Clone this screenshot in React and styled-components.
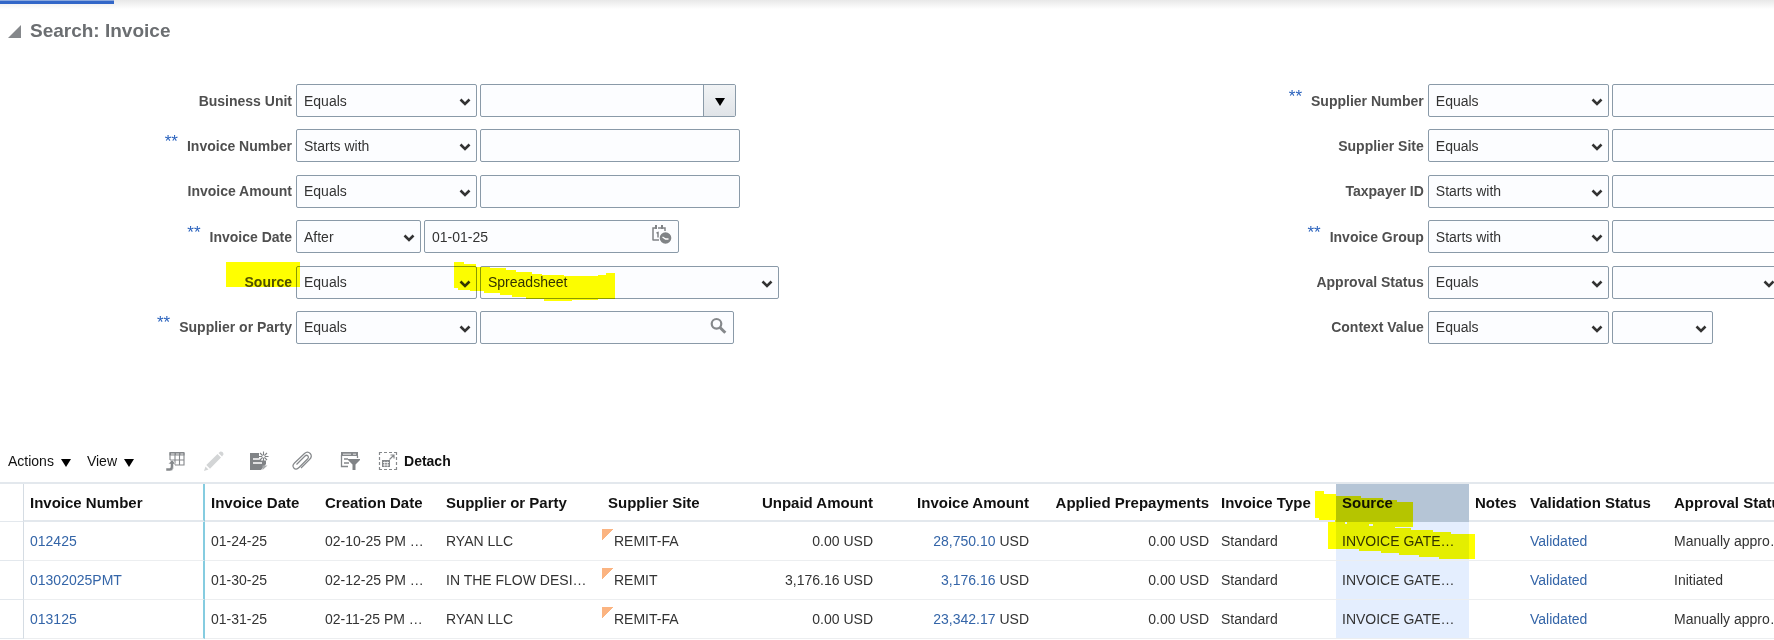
import React from 'react';
import styled, { createGlobalStyle, css } from 'styled-components';

const leftFields = [
  { label: 'Business Unit', op: 'Equals', kind: 'combo', width: 256 },
  { label: 'Invoice Number', op: 'Starts with', required: true, kind: 'text', width: 260 },
  { label: 'Invoice Amount', op: 'Equals', kind: 'text', width: 260 },
  { label: 'Invoice Date', op: 'After', opWidth: 125, required: true, kind: 'date', width: 255, value: '01-01-25' },
  { label: 'Source', op: 'Equals', kind: 'select', width: 299, value: 'Spreadsheet', marked: true },
  { label: 'Supplier or Party', op: 'Equals', required: true, kind: 'search', width: 254 },
];

const rightFields = [
  { label: 'Supplier Number', op: 'Equals', required: true, kind: 'text', width: 260 },
  { label: 'Supplier Site', op: 'Equals', kind: 'text', width: 260 },
  { label: 'Taxpayer ID', op: 'Starts with', kind: 'text', width: 260 },
  { label: 'Invoice Group', op: 'Starts with', required: true, kind: 'text', width: 260 },
  { label: 'Approval Status', op: 'Equals', kind: 'select', width: 169, value: '' },
  { label: 'Context Value', op: 'Equals', kind: 'select', width: 101, value: '' },
];

const columns = [
  { key: 'number', title: 'Invoice Number', width: 181, link: true, frozen: true },
  { key: 'date', title: 'Invoice Date', width: 114 },
  { key: 'created', title: 'Creation Date', width: 121 },
  { key: 'party', title: 'Supplier or Party', width: 162 },
  { key: 'site', title: 'Supplier Site', width: 120, flagged: true },
  { key: 'unpaid', title: 'Unpaid Amount', width: 157, right: true },
  { key: 'amount', title: 'Invoice Amount', width: 156, right: true },
  { key: 'prepaid', title: 'Applied Prepayments', width: 180, right: true },
  { key: 'type', title: 'Invoice Type', width: 121 },
  { key: 'source', title: 'Source', width: 133, selected: true },
  { key: 'notes', title: 'Notes', width: 55 },
  { key: 'validation', title: 'Validation Status', width: 144, link: true },
  { key: 'approval', title: 'Approval Status', width: 150 },
];

const rows = [
  {
    number: '012425', date: '01-24-25', created: '02-10-25 PM …', party: 'RYAN LLC', site: 'REMIT-FA',
    unpaid: '0.00 USD', amount: '28,750.10', prepaid: '0.00 USD', type: 'Standard',
    source: 'INVOICE GATE…', validation: 'Validated', approval: 'Manually appro…',
  },
  {
    number: '01302025PMT', date: '01-30-25', created: '02-12-25 PM …', party: 'IN THE FLOW DESI…', site: 'REMIT',
    unpaid: '3,176.16 USD', amount: '3,176.16', prepaid: '0.00 USD', type: 'Standard',
    source: 'INVOICE GATE…', validation: 'Validated', approval: 'Initiated',
  },
  {
    number: '013125', date: '01-31-25', created: '02-11-25 PM …', party: 'RYAN LLC', site: 'REMIT-FA',
    unpaid: '0.00 USD', amount: '23,342.17', prepaid: '0.00 USD', type: 'Standard',
    source: 'INVOICE GATE…', validation: 'Validated', approval: 'Manually appro…',
  },
];

const Dropdown = ({ id, label, value, width }) => (
  <SelectWrap $width={width}>
    <Select id={id} aria-label={label} defaultValue={value}>
      <option value={value}>{value}</option>
    </Select>
    <Chevron viewBox="0 0 12 8" aria-hidden="true">
      <path d="M1.5 1.5 L6 6 L10.500 1.5" fill="none" stroke="#333" strokeWidth="2.6" />
    </Chevron>
  </SelectWrap>
);

const ValueControl = ({ id, kind, width, value }) => {
  if (kind === 'select') {
    return <Dropdown id={id} value={value} width={width} />;
  }
  if (kind === 'combo') {
    return (
      <Combo $width={width}>
        <Bare id={id} type="text" />
        <ComboButton type="button" aria-label="Show choices"><Caret /></ComboButton>
      </Combo>
    );
  }
  return (
    <InputBox $width={width}>
      <Bare id={id} type="text" defaultValue={value} />
      {kind === 'date' && (
        <InnerButton type="button" aria-label="Select date and time">
          <svg width="20" height="20" viewBox="0 0 20 20">
            <path d="M1 15.500 V3 H4 M6 3 H9 M11 3 H13 V6 M1 15 H7" fill="none" stroke="#808386" strokeWidth="1.500" />
            <path d="M3 0 H5 V4 H3 Z M9 0 H11 V4 H9 Z" fill="#808386" />
            <path d="M4.500 8 L6 7.500 V12.500" fill="none" stroke="#808386" strokeWidth="1.500" />
            <circle cx="13.500" cy="13" r="5.800" fill="#808386" />
            <path d="M10.500 12 L13.500 14 H16.500" fill="none" stroke="#fff" strokeWidth="1.300" />
          </svg>
        </InnerButton>
      )}
      {kind === 'search' && (
        <InnerButton type="button" aria-label="Search">
          <svg width="18" height="18" viewBox="0 0 18 18">
            <circle cx="7.500" cy="6.800" r="4.800" fill="none" stroke="#85888b" strokeWidth="2.200" />
            <path d="M11 10.500 L16.300 15.800" stroke="#85888b" strokeWidth="3" />
          </svg>
        </InnerButton>
      )}
    </InputBox>
  );
};

const SearchField = ({ label, op, opWidth = 181, required, marked, kind, width, value }) => {
  const id = label.toLowerCase().replace(/ /g, '-');

  return (
    <FieldRow>
      <Label htmlFor={id}>
        {required && <Stars>**</Stars>}
        {label}
      </Label>
      <Dropdown label={`${label} operator`} value={op} width={opWidth} />
      <ValueControl id={id} kind={kind} width={width} value={value} />
      {marked && (
        <FieldMarker width="400" height="40" viewBox="0 0 400 40" aria-hidden="true">
          <path d="M0 0 H74 V25 H0 Z" />
          <path d="M228 0 H238 V2 H250 V5 H264 V6 H280 V8 H290 V10 H306 V12 H316 V13 H338 V14 H372 V13 H380 V11 H389 V37 H372 V38 H346 V39 H318 V37 H300 V35 H286 V33 H274 V31 H258 V29 H244 V28 H232 V26 H228 Z" />
        </FieldMarker>
      )}
    </FieldRow>
  );
};

const CellValue = ({ column, row }) => {
  const value = row[column.key];

  if (column.key === 'amount') {
    return <><Link href="#">{value}</Link> USD</>;
  }
  if (column.link) {
    return <Link href="#">{value}</Link>;
  }
  return value || null;
};

const Toolbar = () => (
  <Bar>
    <MenuButton type="button">Actions<Caret /></MenuButton>
    <MenuButton type="button">View<Caret /></MenuButton>
    <Tools>
      <Tool type="button" aria-label="Export to Excel" $gap={18}>
        <svg width="20" height="20" viewBox="0 0 20 20">
          <path d="M3.500 1 H18.500 V4.500 H3.500 Z" fill="#85888b" />
          <path d="M5 3 H8.500 M10 3 H13 M14.500 3 H17.500" stroke="#fff" strokeWidth="0.800" />
          <path d="M4 9 V1.500 M9 4 V14 M13.500 4 V14 M18 2 V14.500 M4 9 H18.500 M9 14 H18.500" fill="none" stroke="#85888b" strokeWidth="1.100" />
          <path d="M0 17 H3.500 Q4.500 17 4.500 15.500 V13 H2.500 L6 8.500 L9.500 13 H7.500 V16 Q7.500 20 4 20 H0 Z" fill="#85888b" stroke="#fff" strokeWidth="0.500" />
        </svg>
      </Tool>
      <Tool type="button" aria-label="Edit" disabled $gap={25}>
        <svg width="20" height="20" viewBox="0 0 20 20">
          <path d="M0 20 L1.500 15.500 L4.500 18.500 Z M2.300 14 L13.500 3 L17 6.500 L6 17.700 Z M14.500 2 L16.500 0.500 Q19.500 0.500 19.500 3.500 L18 5.500 Z" fill="#d3d5d6" />
        </svg>
      </Tool>
      <Tool type="button" aria-label="Create Invoice" $gap={23}>
        <svg width="20" height="20" viewBox="0 0 20 20">
          <path d="M1 2 H10 V7 L12 9.500 H17 V13 L12 19 H1 Z" fill="#808386" />
          <path d="M4 8 H11 M4 12 H13" stroke="#fff" strokeWidth="1.400" />
          <path d="M13.500 19 V14.500 H18.500 Z" fill="#a9acae" />
          <path d="M14.500 0.500 V10.500 M9.500 5.500 H19.500 M11 2 L18 9 M18 2 L11 9" stroke="#808386" strokeWidth="1.100" />
          <circle cx="14.500" cy="5.500" r="1.300" fill="#fff" />
        </svg>
      </Tool>
      <Tool type="button" aria-label="Attachments" $gap={28}>
        <svg width="20" height="20" viewBox="0 0 20 20">
          <path d="M4.500 13.500 L13 5 Q14.500 3.500 16 5 Q17 6.500 15.500 8 L7 16.500 Q4 19.500 1.800 17 Q-0.200 14.500 2.500 12 L12.500 2.500 Q15.500 -0.300 18.200 2.500 Q20.700 5.500 17.500 8.500 L9 17" fill="none" stroke="#85888b" strokeWidth="1.200" />
        </svg>
      </Tool>
      <Tool type="button" aria-label="Query By Example" $gap={18}>
        <svg width="20" height="20" viewBox="0 0 20 20">
          <path d="M1 1 H18 V5 H1 Z" fill="#85888b" />
          <path d="M3 3.200 H11 M13 3.200 H16" stroke="#fff" strokeWidth="0.800" />
          <path d="M1.500 4 V15.500 H8 M17.500 5 V7 M4 8 H8 M4 12 H9" fill="none" stroke="#85888b" strokeWidth="1.300" />
          <path d="M8 8 H20 V9 L15.500 13.500 V19 H12.500 V13.500 L8 9 Z" fill="#808386" />
        </svg>
      </Tool>
      <DetachButton type="button">
        <svg width="20" height="20" viewBox="0 0 20 20" aria-hidden="true">
          <path d="M1 1.500 H19 M1 18.500 H19 M1.500 1 V19 M18.500 1 V19" fill="none" stroke="#85888b" strokeWidth="1.200" strokeDasharray="3 2" />
          <rect x="4" y="9" width="8" height="7" fill="#85888b" />
          <path d="M5 11.500 H11 M5 14 H11 M6.700 10.500 V15.500 M9.300 10.500 V15.500" stroke="#fff" strokeWidth="0.800" />
          <path d="M11.500 8.500 L16 4 M12.500 4 H16 V7.500" fill="none" stroke="#85888b" strokeWidth="1.200" />
        </svg>
        Detach
      </DetachButton>
    </Tools>
  </Bar>
);

export default function App() {
  return (
    <Page>
      <GlobalStyle />
      <TabStrip><ActiveTab /></TabStrip>

      <Heading>
        <Disclosure width="13" height="13" viewBox="0 0 13 13" aria-hidden="true">
          <path d="M13 0 V13 H0 Z" fill="#85888b" />
        </Disclosure>
        Search: Invoice
      </Heading>

      <SearchForm onSubmit={(e) => e.preventDefault()}>
        <FieldColumn>
          {leftFields.map((field) => <SearchField key={field.label} {...field} />)}
        </FieldColumn>
        <FieldColumn>
          {rightFields.map((field) => <SearchField key={field.label} {...field} />)}
        </FieldColumn>
      </SearchForm>

      <Toolbar />

      <TableScroll>
        <Table>
          <colgroup>
            <Col $width={24} />
            {columns.map((column) => <Col key={column.key} $width={column.width} />)}
          </colgroup>
          <thead>
            <tr>
              <RowHandle as="td" />
              {columns.map((column) => (
                <HeadCell key={column.key} $right={column.right} $frozen={column.frozen} $selected={column.selected}>
                  {column.title}
                  {column.selected && (
                    <TableMarker width="160" height="70" viewBox="0 0 160 70" aria-hidden="true">
                      <path d="M0 0 H9 V3 H21 V5 H46 V7 H68 V9 H82 V11 H98 V36 H76 V35 H58 V33 H32 V31 H20 V29 H4 V27 H0 Z" />
                      <path d="M13 31 H30 V33 H54 V35 H80 V37 H96 V39 H118 V41 H136 V43 H160 V68 H124 V66 H104 V64 H84 V62 H66 V60 H44 V58 H13 Z" />
                    </TableMarker>
                  )}
                </HeadCell>
              ))}
            </tr>
          </thead>
          <tbody>
            {rows.map((row) => (
              <tr key={row.number}>
                <RowHandle />
                {columns.map((column) => (
                  <Cell
                    key={column.key}
                    $right={column.right}
                    $frozen={column.frozen}
                    $selected={column.selected}
                    $flagged={column.flagged}
                  >
                    <CellValue column={column} row={row} />
                  </Cell>
                ))}
              </tr>
            ))}
          </tbody>
        </Table>
      </TableScroll>
    </Page>
  );
}

const GlobalStyle = createGlobalStyle`
  * {
    box-sizing: border-box;
  }

  body {
    margin: 0;
    background: #fff;
    overflow: hidden;
  }

  body, button, input, select {
    font-family: 'Liberation Sans', Arial, sans-serif;
    font-size: 14px;
    color: #333;
  }
`;

const Page = styled.main`
  overflow: hidden;
`;

const TabStrip = styled.div`
  height: 9px;
  background: linear-gradient(#e8e8e8, #fff);
`;

const ActiveTab = styled.div`
  width: 114px;
  height: 4px;
  background: #3367c8;
  border-top: 1px solid #8ba8dd;
`;

const Heading = styled.h1`
  display: flex;
  align-items: center;
  gap: 9px;
  margin: 0;
  padding: 10px 8px;
  font-size: 19px;
  line-height: 24px;
  color: #6b6e71;
`;

const Disclosure = styled.svg`
  display: block;
`;

const SearchForm = styled.form`
  display: grid;
  grid-template-columns: minmax(0, 638fr) minmax(0, 362fr);
  padding-top: 31px;
`;

const FieldColumn = styled.div`
  display: flex;
  flex-direction: column;
  justify-content: space-between;
  min-height: 260px;
`;

const FieldRow = styled.div`
  position: relative;
  display: flex;
  align-items: center;
  gap: 3px;
  height: 33px;
`;

const Label = styled.label`
  flex: none;
  width: 293px;
  padding-right: 1px;
  text-align: right;
  font-weight: bold;
  color: #4f4f4f;
  white-space: nowrap;
`;

const Stars = styled.span`
  margin-right: 9px;
  font-size: 17px;
  font-weight: normal;
  line-height: 0;
  vertical-align: 4px;
  color: #2a62bd;
`;

const boxed = css`
  flex: none;
  width: ${({ $width }) => $width}px;
  height: 33px;
  border: 1px solid #8a9aa8;
  border-radius: 2px;
  background: #fcfdff;
`;

const SelectWrap = styled.span`
  ${boxed}
  position: relative;
`;

const Select = styled.select`
  display: block;
  width: 100%;
  height: 100%;
  padding: 0 24px 0 7px;
  border: 0;
  background: transparent;
  appearance: none;
`;

const Chevron = styled.svg`
  position: absolute;
  right: 5px;
  top: 13px;
  width: 12px;
  height: 8px;
  pointer-events: none;
`;

const InputBox = styled.span`
  ${boxed}
  display: flex;
  align-items: center;
`;

const Combo = styled(InputBox)`
  overflow: hidden;
`;

const Bare = styled.input`
  flex: 1;
  min-width: 0;
  height: 100%;
  padding: 0 7px;
  border: 0;
  background: transparent;
`;

const ComboButton = styled.button`
  display: flex;
  align-items: center;
  justify-content: center;
  width: 32px;
  height: 100%;
  padding: 2px 0 0;
  border: 0;
  border-left: 1px solid #8a9aa8;
  background: linear-gradient(#f1f3f5, #e0e4e8);
`;

const Caret = styled.span`
  border: 5px solid transparent;
  border-top: 8px solid #000;
  border-bottom: 0;
`;

const InnerButton = styled.button`
  display: flex;
  margin-right: 6px;
  padding: 0 0 3px;
  border: 0;
  background: none;
`;

const marker = css`
  position: absolute;
  fill: #ffff00;
  mix-blend-mode: multiply;
  pointer-events: none;
`;

const FieldMarker = styled.svg`
  ${marker}
  left: 226px;
  top: -4px;
`;

const TableMarker = styled.svg`
  ${marker}
  left: -21px;
  top: 7px;
`;

const Bar = styled.div`
  display: flex;
  align-items: center;
  height: 42px;
  margin-top: 96px;
  padding-left: 8px;
`;

const MenuButton = styled.button`
  display: flex;
  align-items: center;
  gap: 7px;
  margin-right: 16px;
  padding: 0;
  border: 0;
  background: none;
  color: #111;

  ${Caret} {
    margin-top: 3px;
  }
`;

const Tools = styled.div`
  display: flex;
  align-items: center;
  margin-left: 16px;
`;

const Tool = styled.button`
  display: flex;
  margin-right: ${({ $gap }) => $gap}px;
  padding: 0;
  border: 0;
  background: none;
`;

const DetachButton = styled.button`
  display: flex;
  align-items: center;
  gap: 6px;
  padding: 0;
  border: 0;
  background: none;
  font-weight: bold;
  color: #111;
`;

const TableScroll = styled.div`
  overflow: hidden;
`;

const Table = styled.table`
  width: 100%;
  table-layout: fixed;
  border-collapse: separate;
  border-spacing: 0;
  border-top: 2px solid #e3e8ed;
`;

const Col = styled.col`
  width: ${({ $width }) => $width}px;
`;

const RowHandle = styled.td`
  border-right: 1px solid #d5dce3;
  border-bottom: 1px solid #e3e8ed;
`;

const cell = css`
  padding: 0 6px;
  text-align: ${({ $right }) => ($right ? 'right' : 'left')};
  white-space: nowrap;
  ${({ $frozen }) => $frozen && 'border-right: 2px solid #85cce0;'}
`;

const HeadCell = styled.th`
  ${cell}
  position: relative;
  height: 38px;
  border-bottom: 2px solid #e3e8ed;
  font-size: 15px;
  color: #111;
  ${({ $selected }) => $selected && css`
    background: #b5c5d6;
    border-bottom-color: #b5c5d6;
  `}
`;

const Cell = styled.td`
  ${cell}
  height: 39px;
  border-bottom: 1px solid #eceef0;
  ${({ $selected }) => $selected && 'background: #e4eefe;'}
  ${({ $flagged }) => $flagged && css`
    padding-left: 12px;
    background: linear-gradient(135deg, #fbb481 8px, transparent 8px) 0 7px / 11px 11px no-repeat;
  `}
`;

const Link = styled.a`
  color: #3465a8;
  text-decoration: none;
`;
